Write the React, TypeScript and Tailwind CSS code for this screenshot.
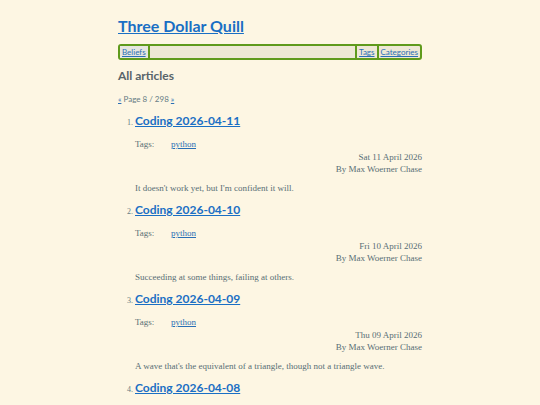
const posts = [
  { n: 1, title: 'Coding 2026-04-11', date: 'Sat 11 April 2026', summary: "It doesn't work yet, but I'm confident it will." },
  { n: 2, title: 'Coding 2026-04-10', date: 'Fri 10 April 2026', summary: 'Succeeding at some things, failing at others.' },
  { n: 3, title: 'Coding 2026-04-09', date: 'Thu 09 April 2026', summary: "A wave that's the equivalent of a triangle, though not a triangle wave." },
  { n: 4, title: 'Coding 2026-04-08', date: 'Wed 08 April 2026', summary: 'More work on the same thing.' },
];

const head = { fontFamily: 'Lato, "Open Sans", sans-serif' };
const body = { fontFamily: '"Liberation Serif", "DejaVu Serif", serif' };

export default function App() {
  return (
    <div className="h-[405px] overflow-hidden bg-[#fdf6e3] text-[#586e75]">
      <div className="mx-auto w-[304px] pt-[14px]">
        <h1 className="text-[16px] font-bold leading-[24px]" style={head}>
          <a href="#" className="text-[#1a6fc4] underline">Three Dollar Quill</a>
        </h1>

        <nav className="mt-[6px] flex h-[16px] items-stretch rounded-[3px] border-2 border-[#5f9a1c] bg-[#eee8d5] text-[8px] leading-[12px]" style={head}>
          <a href="#" className="bg-[#e6e6df] px-[2px] text-[#2a6fb5] underline">Beliefs</a>
          <span className="w-[2px] bg-[#5f9a1c]" />
          <span className="flex-1" />
          <span className="w-[2px] bg-[#5f9a1c]" />
          <a href="#" className="px-[2px] text-[#2a6fb5] underline">Tags</a>
          <span className="w-[2px] bg-[#5f9a1c]" />
          <a href="#" className="px-[2px] text-[#2a6fb5] underline">Categories</a>
        </nav>

        <h2 className="mt-[7px] text-[12px] font-bold leading-[18px] text-[#58646a]" style={head}>All articles</h2>

        <p className="mt-[9px] text-[8px] leading-[10px] text-[#657b83]" style={head}>
          <a href="#" className="text-[#2a6fb5] underline">«</a> Page 8 / 298 <a href="#" className="text-[#2a6fb5] underline">»</a>
        </p>

        <ol className="mt-[8px] list-decimal pl-[17px] text-[8px] marker:text-[#657b83]" style={body}>
          {posts.map((p) => (
            <li key={p.n} className="mb-[7px]">
              <a href="#" className="text-[12px] font-bold leading-[18px] text-[#1a6fc4] underline" style={head}>{p.title}</a>
              <div className="mt-[8px] flex text-[9px] leading-[12px]">
                <span className="w-[36px]">Tags:</span>
                <a href="#" className="text-[#2a6fb5] underline">python</a>
              </div>
              <div className="mt-[1px] text-right text-[9px] leading-[12px]">
                <div>{p.date}</div>
                <div>By Max Woerner Chase</div>
              </div>
              <p className="mt-[7px] text-[9px] leading-[12px]">{p.summary}</p>
            </li>
          ))}
        </ol>
      </div>
    </div>
  );
}
